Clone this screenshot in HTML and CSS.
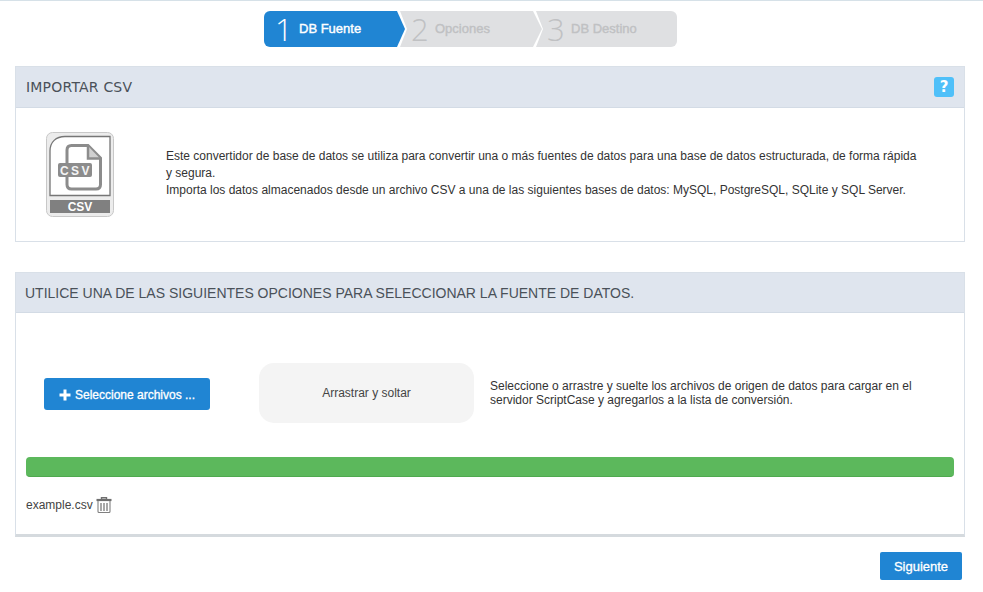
FILE: index.html
```html
<!DOCTYPE html>
<html lang="es">
<head>
<meta charset="utf-8">
<title>Importar CSV</title>
<link rel="stylesheet" href="styles.css">
</head>
<body>
<nav class="steps">
  <div class="step step-first step-active"><span class="step-num">1</span><span class="step-label">DB Fuente</span></div>
  <div class="step step-mid"><span class="step-num">2</span><span class="step-label">Opciones</span></div>
  <div class="step step-last"><span class="step-num">3</span><span class="step-label">DB Destino</span></div>
</nav>

<section class="panel panel-intro">
  <header class="panel-head">
    <h2 class="title-intro">IMPORTAR CSV</h2>
    <span class="help">?</span>
  </header>
  <div class="intro-body">
    <svg class="csv-icon" width="68" height="85" viewBox="0 0 68 85" aria-hidden="true">
      <rect x="0.5" y="0.5" width="67" height="84" rx="6" fill="#ececec" stroke="#c8c8c8"/>
      <path d="M4 63.500V19C4 10 10 4.500 19 4.500H64V63.500Z" fill="#fff" stroke="#767676" stroke-width="1.300"/>
      <path d="M21 31V18C21 15 23 13.500 25.500 13.500H42L54.500 26V52.500C54.500 55.500 53 57 50 57H25.500C23 57 21 55.500 21 52.500V45" fill="none" stroke="#8c8c8c" stroke-width="3"/>
      <path d="M42 14V26.500H54" fill="#d0d0d0" stroke="#8c8c8c" stroke-width="2.500"/>
      <rect x="12" y="31" width="34" height="14" rx="2" fill="#8c8c8c"/>
      <text x="30" y="42.500" class="csv-big">CSV</text>
      <rect x="4" y="68" width="60" height="13" fill="#808080"/>
      <text x="34" y="79" class="csv-small">CSV</text>
    </svg>
    <div class="intro-text">
      <p>Este convertidor de base de datos se utiliza para convertir una o más fuentes de datos para una base de datos estructurada, de forma rápida y segura.</p>
      <p>Importa los datos almacenados desde un archivo CSV a una de las siguientes bases de datos: MySQL, PostgreSQL, SQLite y SQL Server.</p>
    </div>
  </div>
</section>

<section class="panel panel-source">
  <header class="panel-head panel-head-source">
    <h2>UTILICE UNA DE LAS SIGUIENTES OPCIONES PARA SELECCIONAR LA FUENTE DE DATOS.</h2>
  </header>
  <div class="source-body">
    <div class="upload-row">
      <button class="btn btn-select" type="button">
        <svg class="plus" width="12" height="12" viewBox="0 0 12 12" aria-hidden="true"><path d="M4.500 0.500H7.500V4.500H11.500V7.500H7.500V11.500H4.500V7.500H0.500V4.500H4.500Z" fill="#fff"/></svg>
        Seleccione archivos ...
      </button>
      <div class="dropzone">Arrastrar y soltar</div>
      <p class="upload-hint">Seleccione o arrastre y suelte los archivos de origen de datos para cargar en el servidor ScriptCase y agregarlos a la lista de conversión.</p>
    </div>
    <div class="progress"></div>
    <div class="file-row">
      <span>example.csv</span>
      <svg class="trash" width="16" height="16" viewBox="0 0 16 16" aria-hidden="true">
        <path d="M0.500 3H15.500" stroke="#6f6f6f" stroke-width="2.200"/>
        <path d="M5.500 2V0.700H10.500V2" fill="none" stroke="#6f6f6f" stroke-width="1.400"/>
        <path d="M2 4V14.500C2 15.200 2.400 15.500 3 15.500H13C13.600 15.500 14 15.200 14 14.500V4" fill="none" stroke="#808080" stroke-width="1.100"/>
        <path d="M5 6V14M8 6V14M11 6V14" stroke="#8c8c8c" stroke-width="1.500"/>
      </svg>
    </div>
  </div>
</section>

<footer class="actions">
  <button class="btn btn-next" type="button">Siguiente</button>
</footer>
</body>
</html>
```

FILE: styles.css
```css
* { box-sizing: border-box; }
html, body { height: 100%; }
body {
  margin: 0;
  padding: 0 18px 0 15px;
  border-top: 1px solid #d6e1e8;
  background: #fff;
  color: #333;
  font-family: "Liberation Sans", Arial, sans-serif;
  font-size: 12px;
  overflow: hidden;
}

.steps {
  display: flex;
  height: 36px;
  margin: 10px 0 19px 249px;
}
.step {
  display: flex;
  align-items: center;
  width: 142px;
  padding-left: 11px;
  background: #dfe0e2;
  color: #c0c1c3;
}
.step-first {
  width: 141px;
  border-radius: 6px 0 0 6px;
  clip-path: polygon(0 0, 133px 0, 100% 50%, 133px 100%, 0 100%);
}
.step-mid {
  width: 142px;
  margin-left: -5px;
  padding-left: 11px;
  clip-path: polygon(0 0, 133px 0, 100% 50%, 133px 100%, 0 100%, 7px 50%);
}
.step-last {
  width: 141px;
  margin-left: -6px;
  padding-left: 11px;
  border-radius: 0 6px 6px 0;
  clip-path: polygon(0 0, 100% 0, 100% 100%, 0 100%, 7px 50%);
}
.step-active { background: #2085d3; color: #fff; }
.step-num {
  width: 24px;
  font-family: "Open Sans", sans-serif;
  font-size: 31px;
  font-weight: 300;
  line-height: 36px;
}
.step-label {
  margin-bottom: 2px;
  font-size: 13px;
  -webkit-text-stroke: 0.4px currentColor;
}

.panel {
  border: 1px solid #d9e0e8;
  background: #fff;
}
.panel-head {
  display: flex;
  align-items: center;
  justify-content: space-between;
  height: 41px;
  padding: 0 10px;
  background: #dfe5ee;
  border-bottom: 1px solid #d3dbe5;
}
.panel-head h2 {
  margin: 0;
  color: #4a5159;
  font-size: 14px;
  font-weight: 400;
}
.panel-head .title-intro {
  font-family: "DejaVu Sans", sans-serif;
  font-size: 14px;
  letter-spacing: 0.2px;
}
.panel-intro { height: 176px; }
.help {
  display: flex;
  align-items: center;
  justify-content: center;
  width: 20px;
  height: 20px;
  border-radius: 3px;
  background: #4fc0f9;
  color: #fff;
  font-family: "DejaVu Sans", sans-serif;
  font-size: 15px;
  font-weight: 700;
}
.intro-body {
  display: flex;
  align-items: center;
  height: 134px;
  padding: 0 46px 0 30px;
}
.csv-icon { flex: none; margin: 0 52px 2px 0; }
.csv-big {
  fill: #f4f4f4;
  font-family: "Liberation Sans", sans-serif;
  font-size: 12px;
  font-weight: 700;
  letter-spacing: 2.5px;
  text-anchor: middle;
}
.csv-small {
  fill: #fff;
  font-family: "Liberation Sans", sans-serif;
  font-size: 12px;
  font-weight: 700;
  text-anchor: middle;
}
.intro-text { padding-bottom: 4px; }
.intro-text p {
  margin: 0;
  line-height: 17px;
  font-size: 12px;
}

.panel-source {
  height: 265px;
  margin-top: 30px;
  border-bottom: 3px solid #d5dade;
}
.panel-head-source { height: 40px; padding: 0 9px; }
.source-body { padding: 0 10px; }
.upload-row {
  display: flex;
  align-items: center;
  height: 144px;
  padding: 16px 0 0 18px;
}
.btn {
  border: 0;
  border-radius: 3px;
  background: #2085d3;
  color: #fff;
  font-family: "Liberation Sans", Arial, sans-serif;
  font-size: 12px;
  -webkit-text-stroke: 0.3px currentColor;
}
.btn-select {
  display: flex;
  align-items: center;
  justify-content: center;
  gap: 4px;
  flex: none;
  width: 166px;
  height: 32px;
  margin-top: 2px;
  padding-top: 2px;
}
.dropzone {
  display: flex;
  flex: none;
  align-items: center;
  justify-content: center;
  width: 215px;
  height: 60px;
  margin: 0 16px 0 49px;
  border-radius: 15px;
  background: #f4f4f4;
  color: #444;
}
.upload-hint {
  flex: 1;
  margin: 0;
  line-height: 14px;
  color: #333;
}
.progress {
  height: 20px;
  border-radius: 4px;
  background: #5cb85c;
  border-bottom: 1px solid #4fa94f;
}
.file-row {
  display: flex;
  align-items: center;
  gap: 3px;
  height: 38px;
  margin-top: 9px;
  color: #444;
}

.actions {
  display: flex;
  justify-content: flex-end;
  margin-top: 15px;
  padding-right: 3px;
}
.btn-next {
  width: 82px;
  height: 28px;
  border-radius: 2px;
  font-size: 13px;
}
```
